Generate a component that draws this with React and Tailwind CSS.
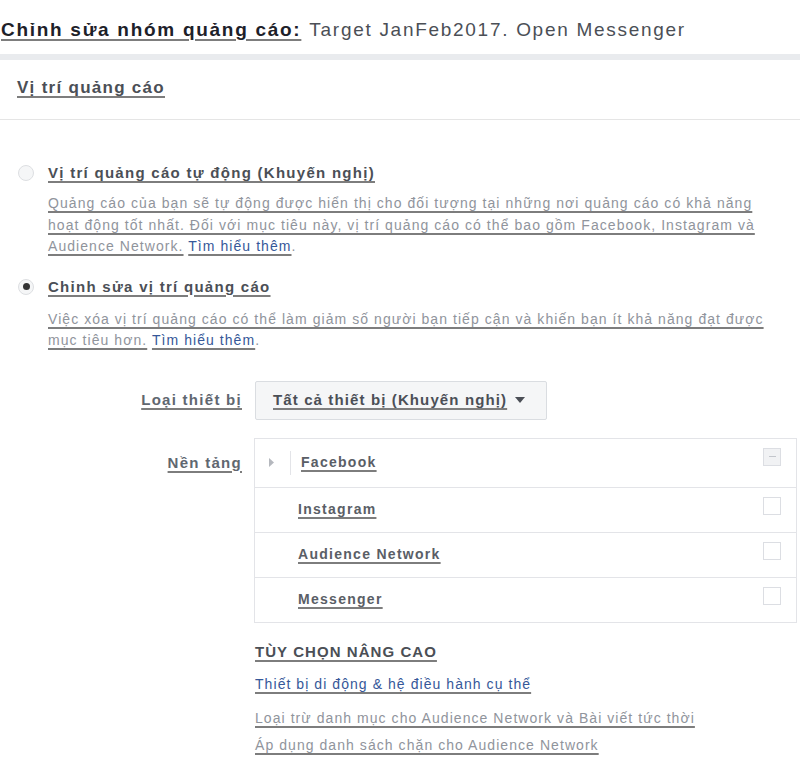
import { useState } from "react";

const u = "underline decoration-[#7d7d7d] decoration-2 underline-offset-[3px]";

function Radio({ checked }) {
  return (
    <span className="mt-[2px] flex h-[16px] w-[16px] shrink-0 items-center justify-center rounded-full border border-[#dddfe2] bg-[#f5f6f7]">
      {checked && <span className="h-[7px] w-[7px] rounded-full bg-[#333]" />}
    </span>
  );
}

function Checkbox({ mixed }) {
  return (
    <span
      className={
        "mt-[9px] flex h-[18px] w-[18px] items-center justify-center border border-[#dcdee3] " +
        (mixed ? "bg-[#f1f2f4]" : "bg-white")
      }
    >
      {mixed && <span className="h-[1px] w-[7px] bg-[#c3c6cc]" />}
    </span>
  );
}

function PlatformRow({ name, first, mixed }) {
  return (
    <div
      className={
        "flex justify-between pl-[12px] pr-[15px] " +
        (first ? "h-[48px]" : "h-[45px] border-t border-[#e3e4e8]")
      }
    >
      <div className="flex items-center">
        {first ? (
          <>
            <svg width="6" height="9" viewBox="0 0 6 9" className="ml-[2px]">
              <path d="M0 0 L5 4.5 L0 9 Z" fill="#b5b8be" />
            </svg>
            <span className="ml-[15px] mr-[10px] h-[24px] w-px bg-[#e3e4e8]" />
          </>
        ) : (
          <span className="w-[31px]" />
        )}
        <span className={"text-[14px] font-bold text-[#5a5e66] " + u}>{name}</span>
      </div>
      <Checkbox mixed={mixed} />
    </div>
  );
}

export default function App() {
  const [choice, setChoice] = useState("edit");

  return (
    <div className="h-[775px] w-[800px] overflow-hidden bg-white font-['Liberation_Sans',Arial,sans-serif] tracking-[0.08em]">
      <div className="flex h-[54px] items-center pl-[1px] pt-[6px] text-[19px] tracking-[0.09em]">
        <span className={"font-bold text-[#1d2129] " + u}>Chỉnh sửa nhóm quảng cáo:</span>
        <span className="ml-[8px] text-[#4b4f56]">Target JanFeb2017. Open Messenger</span>
      </div>
      <div className="h-[6px] bg-[#e9ebee]" />

      <div className="flex h-[60px] items-center border-b border-[#e5e5e5] pb-[3px] pl-[17px]">
        <span className={"text-[17px] font-bold text-[#4b4f56] " + u}>Vị trí quảng cáo</span>
      </div>

      <div className="pl-[18px] pt-[43px]">
        <div className="flex gap-[14px]" onClick={() => setChoice("auto")}>
          <Radio checked={choice === "auto"} />
          <div>
            <div className={"text-[15px] leading-[20px] font-bold text-[#4b4f56] " + u}>
              Vị trí quảng cáo tự động (Khuyến nghị)
            </div>
            <p className="mt-[10px] text-[14px] leading-[21.5px] tracking-[1.06px] text-[#90949c]">
              <span className={u}>Quảng cáo của bạn sẽ tự động được hiển thị cho đối tượng tại những nơi quảng cáo có khả năng</span>
              <br />
              <span className={u}>hoạt động tốt nhất. Đối với mục tiêu này, vị trí quảng cáo có thể bao gồm Facebook, Instagram và</span>
              <br />
              <span className={u}>Audience Network.</span>{" "}
              <a className={"text-[#365899] " + u}>Tìm hiểu thêm</a>.
            </p>
          </div>
        </div>

        <div className="mt-[19px] flex gap-[14px]" onClick={() => setChoice("edit")}>
          <Radio checked={choice === "edit"} />
          <div>
            <div className={"text-[15px] leading-[20px] font-bold text-[#4b4f56] " + u}>
              Chỉnh sửa vị trí quảng cáo
            </div>
            <p className="mt-[12px] text-[14px] leading-[21px] tracking-[1.06px] text-[#90949c]">
              <span className={u}>Việc xóa vị trí quảng cáo có thể làm giảm số người bạn tiếp cận và khiến bạn ít khả năng đạt được</span>
              <br />
              <span className={u}>mục tiêu hơn.</span>{" "}
              <a className={"text-[#365899] " + u}>Tìm hiểu thêm</a>.
            </p>
          </div>
        </div>
      </div>

      <div className="mt-[30px] flex items-center">
        <div className="w-[242px] text-right">
          <span className={"text-[15px] font-bold text-[#606770] " + u}>Loại thiết bị</span>
        </div>
        <button className="ml-[13px] flex h-[39px] w-[292px] items-center rounded-[2px] border border-[#dadde1] bg-[#f5f6f7] pl-[17px] tracking-[0.07em]">
          <span className={"text-[15px] font-bold text-[#4b4f56] " + u}>Tất cả thiết bị (Khuyến nghị)</span>
          <svg width="10" height="6" viewBox="0 0 10 6" className="ml-[8px]">
            <path d="M0 0 H10 L5 6 Z" fill="#4b4f56" />
          </svg>
        </button>
      </div>

      <div className="mt-[18px] flex items-start">
        <div className="w-[242px] pt-[13px] text-right">
          <span className={"text-[15px] font-bold text-[#606770] " + u}>Nền tảng</span>
        </div>
        <div className="ml-[12px] w-[543px] border border-[#e3e4e8]">
          <PlatformRow name="Facebook" first mixed />
          <PlatformRow name="Instagram" />
          <PlatformRow name="Audience Network" />
          <PlatformRow name="Messenger" />
        </div>
      </div>

      <div className="ml-[255px] mt-[19px] flex flex-col items-start tracking-[1.06px]">
        <span className={"text-[15px] leading-[20px] font-bold text-[#4b4f56] " + u}>TÙY CHỌN NÂNG CAO</span>
        <a className={"mt-[12px] text-[14px] leading-[20px] text-[#365899] " + u}>
          Thiết bị di động &amp; hệ điều hành cụ thể
        </a>
        <span className={"mt-[14px] text-[14px] leading-[20px] text-[#90949c] " + u}>
          Loại trừ danh mục cho Audience Network và Bài viết tức thời
        </span>
        <span className={"mt-[7px] text-[14px] leading-[20px] text-[#90949c] " + u}>
          Áp dụng danh sách chặn cho Audience Network
        </span>
      </div>
    </div>
  );
}
